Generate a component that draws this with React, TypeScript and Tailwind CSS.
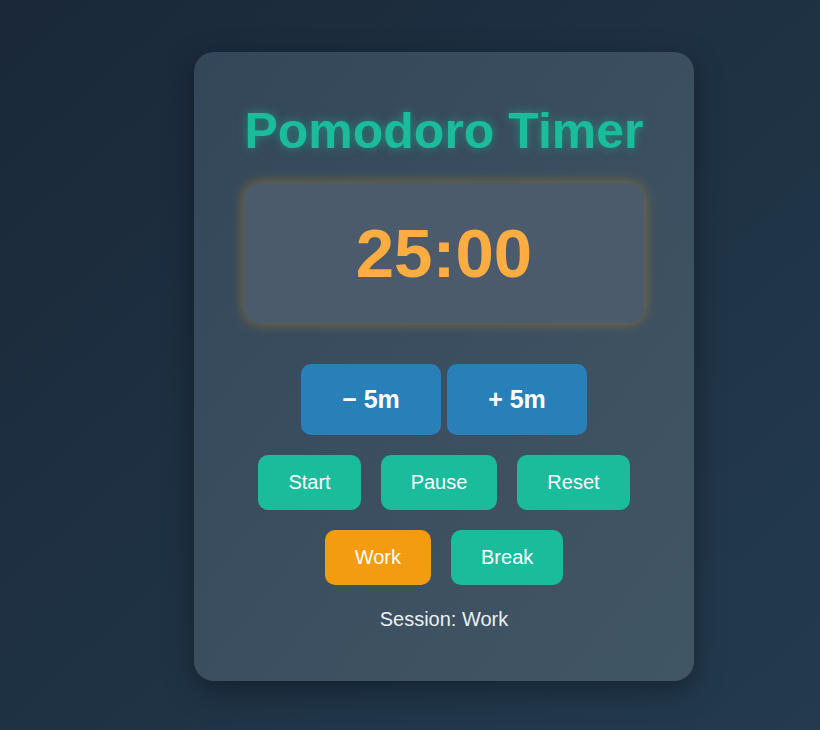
import React from 'react';

const App: React.FC = () => {
  const [minutes, setMinutes] = React.useState(25);
  const [session, setSession] = React.useState<'Work' | 'Break'>('Work');

  const time = `${String(minutes).padStart(2, '0')}:00`;

  const teal = 'rounded-[10px] bg-[#1abc9c] px-[30px] py-4 text-[20px] leading-[23px] text-white';

  return (
    <div className="min-h-screen bg-gradient-to-br from-[#1a2839] to-[#233b4f] font-['Liberation_Sans',Arial,sans-serif] flex justify-center pt-[52px] pl-[68px]">
      <div className="w-[500px] h-[629px] rounded-[20px] bg-gradient-to-br from-[#34475a] to-[#415665] shadow-[0_10px_30px_rgba(0,0,0,0.35)] flex flex-col items-center pt-[51px] pb-[50px]">
        <h1 className="text-[50px] leading-[57px] font-bold text-[#1abc9c] [text-shadow:0_0_10px_rgba(26,188,156,0.55)]">
          Pomodoro Timer
        </h1>

        <div className="mt-[23px] w-[400px] h-[140px] rounded-[16px] bg-[#4b5b6c] shadow-[0_0_14px_rgba(255,165,0,0.4)] flex items-center justify-center">
          <span className="text-[69px] leading-none font-bold text-[#ffad42]">{time}</span>
        </div>

        <div className="mt-[41px] flex gap-[6px]">
          <button
            onClick={() => setMinutes(m => Math.max(5, m - 5))}
            className="w-[140px] h-[71px] rounded-[10px] bg-[#2980b9] text-[25px] font-bold text-white"
          >
            − 5m
          </button>
          <button
            onClick={() => setMinutes(m => m + 5)}
            className="w-[140px] h-[71px] rounded-[10px] bg-[#2980b9] text-[25px] font-bold text-white"
          >
            + 5m
          </button>
        </div>

        <div className="mt-5 flex gap-5">
          <button className={teal}>Start</button>
          <button className={teal}>Pause</button>
          <button className={teal} onClick={() => setMinutes(25)}>Reset</button>
        </div>

        <div className="mt-5 flex gap-5">
          <button
            onClick={() => setSession('Work')}
            className={`rounded-[10px] px-[30px] py-4 text-[20px] leading-[23px] text-white ${session === 'Work' ? 'bg-[#f39c12]' : 'bg-[#1abc9c]'}`}
          >
            Work
          </button>
          <button
            onClick={() => setSession('Break')}
            className={`rounded-[10px] px-[30px] py-4 text-[20px] leading-[23px] text-white ${session === 'Break' ? 'bg-[#f39c12]' : 'bg-[#1abc9c]'}`}
          >
            Break
          </button>
        </div>

        <p className="mt-[23px] text-[20px] leading-[23px] text-[#ecf0f1]">Session: {session}</p>
      </div>
    </div>
  );
};

export default App;
